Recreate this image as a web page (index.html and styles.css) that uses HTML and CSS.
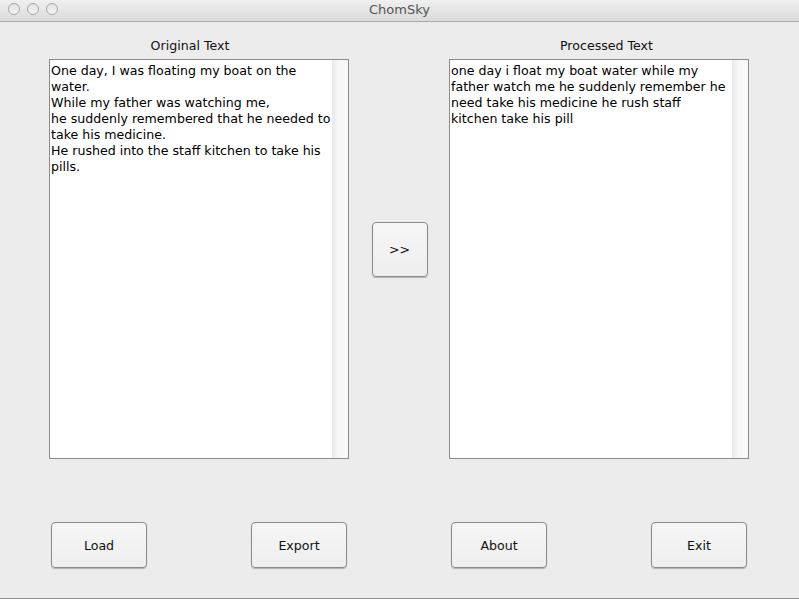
FILE: index.html
```html
<!DOCTYPE html>
<html>
<head>
<meta charset="utf-8">
<link rel="stylesheet" href="styles.css">
</head>
<body>
<div class="window">
  <div class="titlebar">
    <div class="lights">
      <span class="light"></span><span class="light"></span><span class="light"></span>
    </div>
    <div class="title">ChomSky</div>
  </div>
  <div class="content">
    <div class="panels">
      <div class="column">
        <div class="label label-left">Original Text</div>
        <div class="textarea">
          <div class="text">One day, I was floating my boat on the water.<br>While my father was watching me,<br>he suddenly remembered that he needed to take his medicine.<br>He rushed into the staff kitchen to take his pills.</div>
          <div class="scroll"></div>
        </div>
      </div>
      <div class="middle">
        <button class="btn btn-go">&gt;&gt;</button>
      </div>
      <div class="column">
        <div class="label label-right">Processed Text</div>
        <div class="textarea">
          <div class="text">one day i float my boat water while my father watch me he suddenly remember he need take his medicine he rush staff kitchen take his pill</div>
          <div class="scroll"></div>
        </div>
      </div>
    </div>
    <div class="buttons">
      <div class="cell"><button class="btn btn-main">Load</button></div>
      <div class="cell"><button class="btn btn-main">Export</button></div>
      <div class="cell"><button class="btn btn-main">About</button></div>
      <div class="cell"><button class="btn btn-main">Exit</button></div>
    </div>
  </div>
</div>
</body>
</html>
```
FILE: styles.css
```css
* { box-sizing: border-box; }
html, body { margin: 0; padding: 0; }
body {
  width: 799px;
  height: 599px;
  overflow: hidden;
  background: #ececec;
  font-family: "DejaVu Sans", "Liberation Sans", sans-serif;
  color: #111;
}
.window {
  width: 799px;
  height: 599px;
  display: flex;
  flex-direction: column;
  border-bottom: 1px solid #8e8e8e;
}
.titlebar {
  height: 22px;
  position: relative;
  background: linear-gradient(#f0f0f0, #dadada);
  border-bottom: 1px solid #a9a9a9;
  display: flex;
  align-items: center;
  justify-content: center;
}
.lights {
  position: absolute;
  left: 8px;
  top: 3px;
  display: flex;
  gap: 7px;
}
.light {
  width: 12px;
  height: 12px;
  border-radius: 50%;
  border: 1px solid #a6a6a6;
  background: linear-gradient(#e2e2e2, #f4f4f4);
}
.title {
  font-size: 13px;
  color: #555;
  margin-top: -2px;
}
.content {
  flex: 1;
  display: flex;
  flex-direction: column;
}
.panels {
  display: flex;
  padding-left: 49px;
  padding-top: 15px;
}
.column {
  width: 300px;
  display: flex;
  flex-direction: column;
}
.label {
  text-align: center;
  font-size: 12.6px;
  height: 22px;
  line-height: 18px;
}
.label-left { padding-right: 18px; }
.label-right { padding-left: 15px; }
.textarea {
  height: 400px;
  border: 1px solid #8c8c8c;
  background: #fff;
  display: flex;
}
.text {
  flex: 1;
  padding: 3px 1px 0 1px;
  font-size: 12.6px;
  line-height: 16px;
  color: #000;
}
.scroll {
  width: 16px;
  background: linear-gradient(90deg, #e9e9e9, #f7f7f7 40%, #fafafa);
}
.middle {
  width: 100px;
  display: flex;
  justify-content: center;
  padding-top: 185px;
}
.btn {
  font-family: "DejaVu Sans", "Liberation Sans", sans-serif;
  font-size: 12.6px;
  color: #111;
  background: linear-gradient(#f6f6f6, #eeeeee);
  border: 1px solid #8a8a8a;
  border-radius: 4px;
  box-shadow: 0 1px 1px rgba(0,0,0,0.25);
  padding: 0;
}
.btn-go {
  width: 56px;
  height: 55px;
  margin-left: 1px;
  align-self: flex-start;
}
.buttons {
  display: grid;
  grid-template-columns: 200px 200px 200px auto;
  padding-left: 51px;
  padding-top: 63px;
}
.btn-main {
  width: 96px;
  height: 46px;
}
```
